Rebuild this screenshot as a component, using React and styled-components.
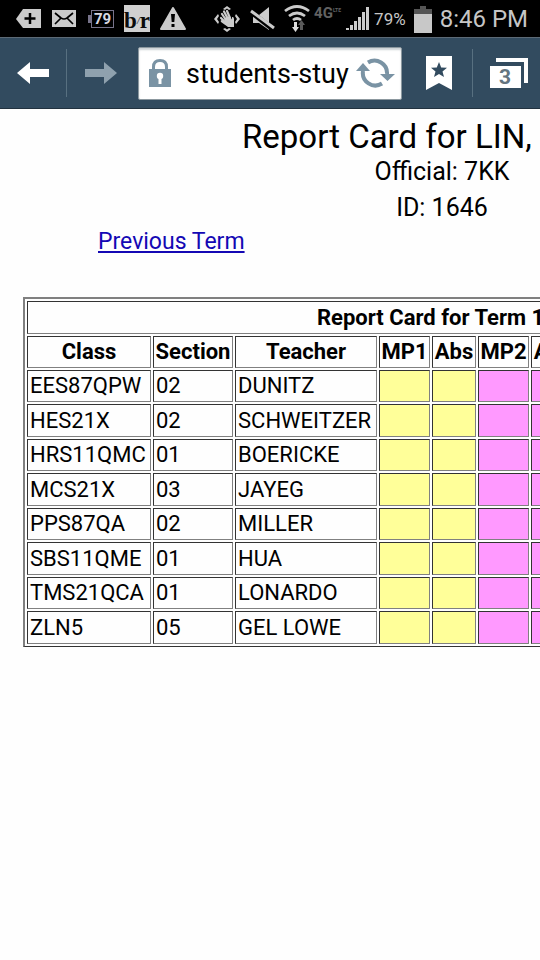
import React from "react";
import styled, { createGlobalStyle } from "styled-components";

const GlobalStyle = createGlobalStyle`
  * { box-sizing: border-box; }
  body {
    margin: 0;
    background: #fefefe;
    color: #000;
    font-family: Roboto, "Liberation Sans", sans-serif;
    overflow-x: hidden;
  }
`;

const StatusBar = styled.header`
  display: flex;
  align-items: center;
  justify-content: space-between;
  height: 38px;
  padding: 0 12px 0 16px;
  background: #000;
  border-bottom: 1px solid #5d6a76;
  color: #c6c6c6;
`;

const IconGroup = styled.div`
  display: flex;
  align-items: center;
  gap: ${(p) => p.$gap}px;
`;

const Icon = styled.svg`
  display: block;
  flex: none;
`;

const BatteryBadge = styled.span`
  position: relative;
  width: 23px;
  height: 18px;
  margin-left: 3px;
  border: 1px solid #77738a;
  color: #d8d8e0;
  font-size: 15px;
  font-weight: 700;
  line-height: 16px;
  text-align: center;
  &::before {
    content: "";
    position: absolute;
    left: -4px;
    top: 4px;
    width: 3px;
    height: 8px;
    background: #77738a;
  }
`;

const NewsBadge = styled.span`
  display: flex;
  justify-content: center;
  width: 26px;
  height: 27px;
  background: #d0d0d0;
  color: #0b0b0b;
  font-family: "Liberation Serif", serif;
  font-size: 23px;
  font-weight: 700;
  line-height: 31px;
  white-space: nowrap;
  i { font-weight: 400; font-size: 10px; }
`;

const Network = styled.span`
  display: flex;
  align-items: flex-start;
  width: 28px;
  height: 27px;
  color: #626262;
  font-size: 15px;
  font-weight: 700;
  line-height: 16px;
  small { font-size: 5px; line-height: 6px; padding-top: 2px; }
`;

const Percent = styled.span`
  font-size: 17px;
  line-height: 24px;
`;

const Clock = styled.time`
  font-size: 24px;
  line-height: 28px;
`;

const Toolbar = styled.nav`
  display: flex;
  align-items: center;
  height: 71px;
  background: #324b5f;
  border-bottom: 1px solid #22323f;
`;

const ToolButton = styled.button`
  display: flex;
  align-items: center;
  justify-content: center;
  flex: none;
  width: ${(p) => p.$width}px;
  height: 70px;
  padding: 0 0 0 ${(p) => p.$inset || 0}px;
  border: 0;
  background: none;
`;

const Divider = styled.span`
  flex: none;
  width: 1px;
  height: 48px;
  background: #587080;
`;

const AddressBar = styled.form`
  display: flex;
  align-items: center;
  flex: 1;
  min-width: 0;
  height: 53px;
  padding: 0 6px 0 10px;
  border: 1px solid #8c989f;
  border-radius: 2px;
  background: #fff;
  box-shadow: inset 0 2px 2px #cdd3d6;
`;

const Address = styled.input`
  flex: 1;
  min-width: 0;
  margin: 0 2px 0 15px;
  padding: 2px 0 0;
  border: 0;
  outline: 0;
  background: none;
  color: #000;
  font: 27px/34px Roboto, "Liberation Sans", sans-serif;
`;

const Reload = styled.button`
  flex: none;
  padding: 0;
  border: 0;
  background: none;
`;

const TabCount = styled.span`
  display: flex;
  width: 38px;
  height: 30px;
  padding-top: 8px;
  position: relative;
  &::before {
    content: "";
    position: absolute;
    top: 0;
    right: 0;
    width: 28px;
    height: 21px;
    border-top: 4px solid #fff;
    border-right: 4px solid #fff;
  }
  span {
    width: 31px;
    height: 22px;
    background: #fff;
    color: #64747f;
    font: 700 21px/22px Roboto, sans-serif;
    text-align: center;
  }
`;

const Page = styled.main`
  overflow: hidden;
  padding: 8px 0 24px 23px;
`;

const Heading = styled.div`
  display: flex;
  flex-direction: column;
  align-items: center;
  width: 838px;
`;

const Title = styled.h1`
  width: 400px;
  margin: 0;
  font-size: 33px;
  font-weight: 400;
  line-height: 40px;
  white-space: nowrap;
`;

const Detail = styled.p`
  margin: 0;
  font-size: 25px;
  line-height: ${(p) => p.$line}px;
`;

const TermLink = styled.a`
  display: block;
  width: fit-content;
  margin-left: 75px;
  color: #1408b4;
  font-size: 23px;
  line-height: 28px;
`;

const Grades = styled.table`
  table-layout: fixed;
  width: 554px;
  margin-top: 41px;
  border: solid #808080;
  border-width: 2px 2px 1px 2px;
  border-bottom-color: #333;
  border-spacing: 2px;
  font-size: 22px;
  line-height: 28px;
  white-space: nowrap;
`;

const Row = styled.tr`
  height: ${(p) => (p.$tall ? 33 : 32)}px;
`;

const Col = styled.col`
  width: ${(p) => p.$width}px;
`;

const cellBorder = `
  border: 1px solid;
  border-color: #333 #808080 #808080 #333;
`;

const HeadCell = styled.th`
  ${cellBorder}
  padding: 0;
  font-weight: 700;
  text-align: center;
`;

const TermCell = styled(HeadCell)`
  padding-left: 289px;
  text-align: left;
`;

const Cell = styled.td`
  ${cellBorder}
  padding: 0 2px;
  background: ${(p) => p.$fill || "transparent"};
`;

const YELLOW = "#ffff99";
const PINK = "#ff99ff";
const columns = [
  ["Class", 124], ["Section", 80], ["Teacher", 142],
  ["MP1", 51], ["Abs", 44], ["MP2", 51], ["Abs", 44],
];
const fills = [YELLOW, YELLOW, PINK, PINK];
const classes = [
  ["EES87QPW", "02", "DUNITZ"],
  ["HES21X", "02", "SCHWEITZER"],
  ["HRS11QMC", "01", "BOERICKE"],
  ["MCS21X", "03", "JAYEG"],
  ["PPS87QA", "02", "MILLER"],
  ["SBS11QME", "01", "HUA"],
  ["TMS21QCA", "01", "LONARDO"],
  ["ZLN5", "05", "GEL LOWE"],
];

function StatusIcons() {
  return (
    <StatusBar>
      <IconGroup $gap={10}>
        <Icon width="26" height="20" viewBox="0 0 26 20">
          <path d="M7 0H25V19H7L0 10Z" fill="#cbcbcb" />
          <path d="M14 4V15M8.500 9.500H19.500" stroke="#000" strokeWidth="2.500" />
        </Icon>
        <Icon width="26" height="18" viewBox="0 0 26 18">
          <path d="M0 0H24V17H0Z" fill="#cbcbcb" />
          <path d="M3 3L9 8Q12 10 15 8L21 3M3 14L9 8M21 14L15 8" fill="none" stroke="#000" strokeWidth="1.700" />
        </Icon>
        <BatteryBadge>79</BatteryBadge>
        <NewsBadge>b<i>/</i>r</NewsBadge>
        <Icon width="26" height="24" viewBox="0 0 26 24">
          <path d="M13 1L25 22H1Z" fill="#cbcbcb" stroke="#cbcbcb" strokeWidth="2" strokeLinejoin="round" />
          <path d="M11 7H15L14.300 15H11.700ZM11.500 17H14.500V20H11.500Z" fill="#000" />
        </Icon>
      </IconGroup>
      <IconGroup $gap={8}>
        <IconGroup $gap={10}>
          <Icon width="26" height="26" viewBox="0 0 26 26">
            <path d="M9 3L13 0L17 3L15 4L13 2.500L11 4ZM9 23L13 26L17 23L15 22L13 23.500L11 22ZM4 8L0 13L4 18L5 16L3 13L5 10ZM22 8L26 13L22 18L21 16L23 13L21 10Z" fill="#cbcbcb" />
            <path d="M8 8L12 14M10 5.500L14 13M13 5L16 12M7 12L12 17" stroke="#cbcbcb" strokeWidth="2.200" strokeLinecap="round" />
            <path d="M10 12L16 10.500L18 13.500V11Q20 10.500 20 13V18L20 21H14L7 16Q6 14 8 14L11 15Z" fill="#cbcbcb" />
          </Icon>
          <Icon width="26" height="26" viewBox="0 0 26 26">
            <path d="M3 9H9L19 1V24L9 17H3Z" fill="#cbcbcb" />
            <path d="M1 6L24 24" stroke="#000" strokeWidth="5" />
            <path d="M1 5L24 22" stroke="#cbcbcb" strokeWidth="3" />
          </Icon>
        </IconGroup>
        <IconGroup $gap={4}>
          <Icon width="26" height="27" viewBox="0 0 26 27">
            <path d="M1 6Q13-3 25 6M5 11Q13 5 21 11M9 15Q13 12 17 15" fill="none" stroke="#cbcbcb" strokeWidth="2.800" />
            <path d="M10 17H13V22H15L11.500 27L8 22H10Z" fill="#dedede" />
            <path d="M16 25V20H14L17.500 15L21 20H19V25Z" fill="#5a5a5a" />
          </Icon>
          <Network>4G<small>LTE</small></Network>
          <Icon width="24" height="24" viewBox="0 0 24 24">
            <path d="M0 23V21H3V23ZM4 23V18H7V23ZM8 23V14H11V23ZM12 23V10H15V23ZM16 23V5H19V23ZM20 23V0H23V23Z" fill="#cbcbcb" />
          </Icon>
          <Percent>79%</Percent>
        </IconGroup>
        <Icon width="18" height="28" viewBox="0 0 18 28">
          <path d="M6 1H12V4H18V9H0V4H6Z" fill="#555" />
          <path d="M0 9H18V28H0Z" fill="#c8c8c8" />
        </Icon>
        <Clock>8:46 PM</Clock>
      </IconGroup>
    </StatusBar>
  );
}

function BrowserBar() {
  return (
    <Toolbar aria-label="Browser">
      <ToolButton $width={66} aria-label="Back">
        <Icon width="32" height="22" viewBox="0 0 32 22">
          <path d="M0 11L13 0V7H32V15H13V22Z" fill="#fff" />
        </Icon>
      </ToolButton>
      <Divider />
      <ToolButton $width={71} aria-label="Forward">
        <Icon width="36" height="22" viewBox="0 0 36 22">
          <path d="M32 11L19 0V7H0V15H19V22Z" fill="#8fa1ae" />
        </Icon>
      </ToolButton>
      <AddressBar>
        <Icon width="22" height="28" viewBox="0 0 22 28">
          <path d="M4.500 12V8Q4.500 1.500 11 1.500T17.500 8V12" fill="none" stroke="#7a93a4" strokeWidth="3" />
          <path d="M0 10H22V28H0Z" fill="#7a93a4" />
          <circle cx="11" cy="17" r="3.200" fill="#fff" />
          <path d="M9.500 17H12.500V25H9.500Z" fill="#fff" />
        </Icon>
        <Address aria-label="Address" defaultValue="students-stuy" />
        <Reload type="button" aria-label="Reload">
          <Icon width="40" height="32" viewBox="0 0 40 32">
            <path d="M13 5.500A12.500 12.500 0 0 1 32 17M27 26.500A12.500 12.500 0 0 1 8 14" fill="none" stroke="#7a93a4" strokeWidth="4" />
            <path d="M25 17H40L32.500 24ZM1 14L8 6L15 14Z" fill="#7a93a4" />
          </Icon>
        </Reload>
      </AddressBar>
      <ToolButton $width={70} $inset={4} aria-label="Bookmarks">
        <Icon width="26" height="34" viewBox="0 0 26 34">
          <path d="M0 0H26V34L13 27L0 34Z" fill="#fff" />
          <path d="M13 6L15.200 11.400L21 11.700L16.500 15.400L18 21L13 17.900L8 21L9.500 15.400L5 11.700L10.800 11.400Z" fill="#324b5f" />
        </Icon>
      </ToolButton>
      <Divider />
      <ToolButton $width={67} $inset={4} aria-label="3 open tabs">
        <TabCount><span>3</span></TabCount>
      </ToolButton>
    </Toolbar>
  );
}

export default function App() {
  return (
    <>
      <GlobalStyle />
      <StatusIcons />
      <BrowserBar />
      <Page>
        <Heading>
          <Title>Report Card for LIN,</Title>
          <Detail $line={30}>Official: 7KK</Detail>
          <Detail $line={41}>ID: 1646</Detail>
        </Heading>
        <TermLink href="#previous-term">Previous Term</TermLink>
        <Grades>
          <colgroup>
            {columns.map(([, width], i) => <Col key={i} $width={width} />)}
          </colgroup>
          <thead>
            <Row $tall><TermCell colSpan={7}>Report Card for Term 1</TermCell></Row>
            <Row>{columns.map(([name], i) => <HeadCell key={i} scope="col">{name}</HeadCell>)}</Row>
          </thead>
          <tbody>
            {classes.map((row, index) => (
              <Row key={row[0]} $tall={index % 2 === 1}>
                {row.map((text, i) => <Cell key={i}>{text}</Cell>)}
                {fills.map((fill, i) => <Cell key={i} $fill={fill} />)}
              </Row>
            ))}
          </tbody>
        </Grades>
      </Page>
    </>
  );
}
